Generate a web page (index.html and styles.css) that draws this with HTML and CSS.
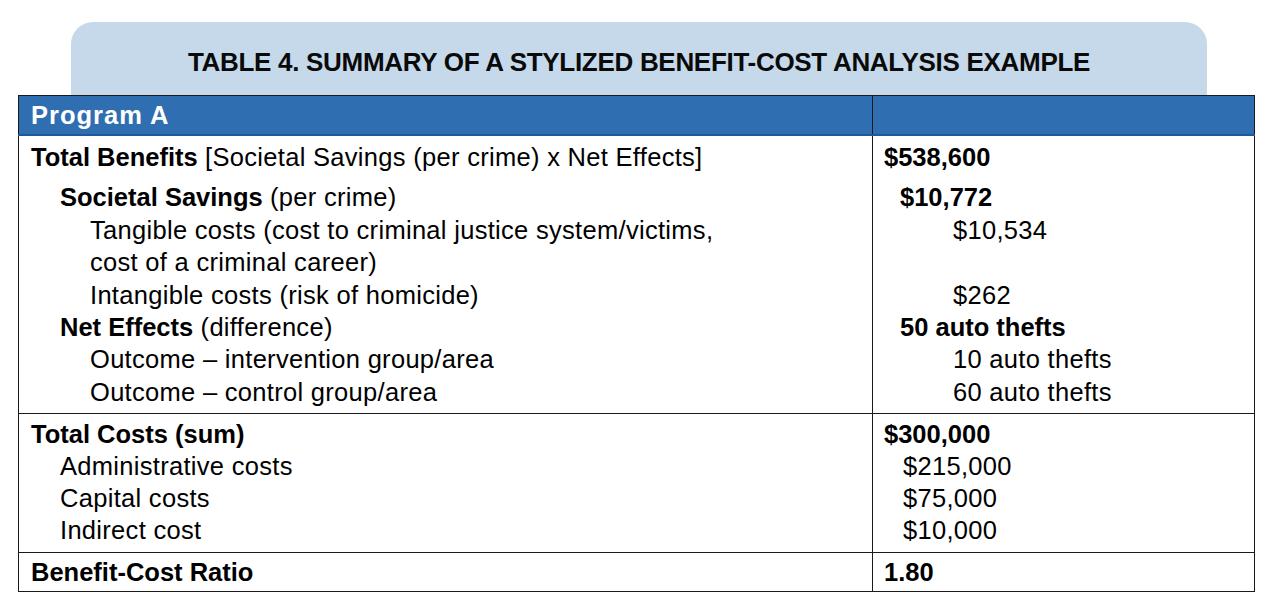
FILE: index.html
```html
<!DOCTYPE html>
<html>
<head>
<meta charset="utf-8">
<link rel="stylesheet" href="styles.css">
</head>
<body>
<div class="page">
  <div class="tab"><h1 class="title">TABLE 4. SUMMARY OF A STYLIZED BENEFIT-COST ANALYSIS EXAMPLE</h1></div>
  <table class="bca">
    <tr class="head">
      <td class="lcol">Program A</td>
      <td class="rcol"></td>
    </tr>
    <tr class="sec sec1">
      <td class="lcol">
        <div class="ln top"><b>Total Benefits</b> [Societal Savings (per crime) x Net Effects]</div>
        <div class="ln i1"><b>Societal Savings</b> (per crime)</div>
        <div class="ln i2">Tangible costs (cost to criminal justice system/victims,</div>
        <div class="ln i2">cost of a criminal career)</div>
        <div class="ln i2">Intangible costs (risk of homicide)</div>
        <div class="ln i1"><b>Net Effects</b> (difference)</div>
        <div class="ln i2">Outcome – intervention group/area</div>
        <div class="ln i2">Outcome – control group/area</div>
      </td>
      <td class="rcol">
        <div class="ln top"><b>$538,600</b></div>
        <div class="ln r1"><b>$10,772</b></div>
        <div class="ln r2">$10,534</div>
        <div class="ln r2">&nbsp;</div>
        <div class="ln r2">$262</div>
        <div class="ln r1"><b>50 auto thefts</b></div>
        <div class="ln r2">10 auto thefts</div>
        <div class="ln r2">60 auto thefts</div>
      </td>
    </tr>
    <tr class="sec sec2">
      <td class="lcol">
        <div class="ln"><b>Total Costs (sum)</b></div>
        <div class="ln i1">Administrative costs</div>
        <div class="ln i1">Capital costs</div>
        <div class="ln i1">Indirect cost</div>
      </td>
      <td class="rcol">
        <div class="ln"><b>$300,000</b></div>
        <div class="ln c1">$215,000</div>
        <div class="ln c1">$75,000</div>
        <div class="ln c1">$10,000</div>
      </td>
    </tr>
    <tr class="ratio">
      <td class="lcol"><b>Benefit-Cost Ratio</b></td>
      <td class="rcol"><b>1.80</b></td>
    </tr>
  </table>
</div>
</body>
</html>
```
FILE: styles.css
```css
html, body {
  margin: 0;
  padding: 0;
  background: #ffffff;
}
body {
  font-family: "Liberation Sans", Arial, Helvetica, sans-serif;
  color: #000000;
}
.page {
  padding-top: 22px;
  width: 1280px;
}
.tab {
  margin-left: 71px;
  width: 1136px;
  height: 73px;
  background: #c5d9ea;
  border-radius: 22px 22px 0 0;
  display: flex;
  align-items: center;
  justify-content: center;
}
.title {
  margin: 0;
  padding-top: 7px;
  font-size: 26px;
  font-weight: bold;
  letter-spacing: -0.3px;
  color: #0a0a0a;
}
.bca {
  margin-left: 18px;
  width: 1237px;
  border-collapse: collapse;
  font-size: 25.5px;
  table-layout: fixed;
}
.bca td {
  border: 1.5px solid #1a1a1a;
  padding: 0;
  vertical-align: top;
}
.lcol {
  width: 841px;
  padding-left: 12px !important;
}
.rcol {
  padding-left: 11px !important;
}
.head td {
  background: #2f6fb1;
  color: #ffffff;
  height: 38px;
  vertical-align: middle;
  font-weight: bold;
  border-bottom: 2px solid #1f5a98;
  letter-spacing: 1px;
}
.ln {
  line-height: 32.4px;
  white-space: nowrap;
  letter-spacing: 0.3px;
}
.ln b {
  letter-spacing: 0;
}
.sec1 td {
  padding-top: 5px;
  padding-bottom: 5px;
}
.sec1 .top {
  margin-bottom: 8px;
}
.i1 { padding-left: 29px; }
.i2 { padding-left: 59px; }
.r1 { padding-left: 16px; }
.r2 { padding-left: 69px; }
.c1 { padding-left: 19px; }
.sec2 td {
  padding-top: 4px;
  padding-bottom: 6px;
}
.sec2 .ln {
  line-height: 32px;
}
.ratio td {
  height: 38px;
  vertical-align: middle;
}
```
